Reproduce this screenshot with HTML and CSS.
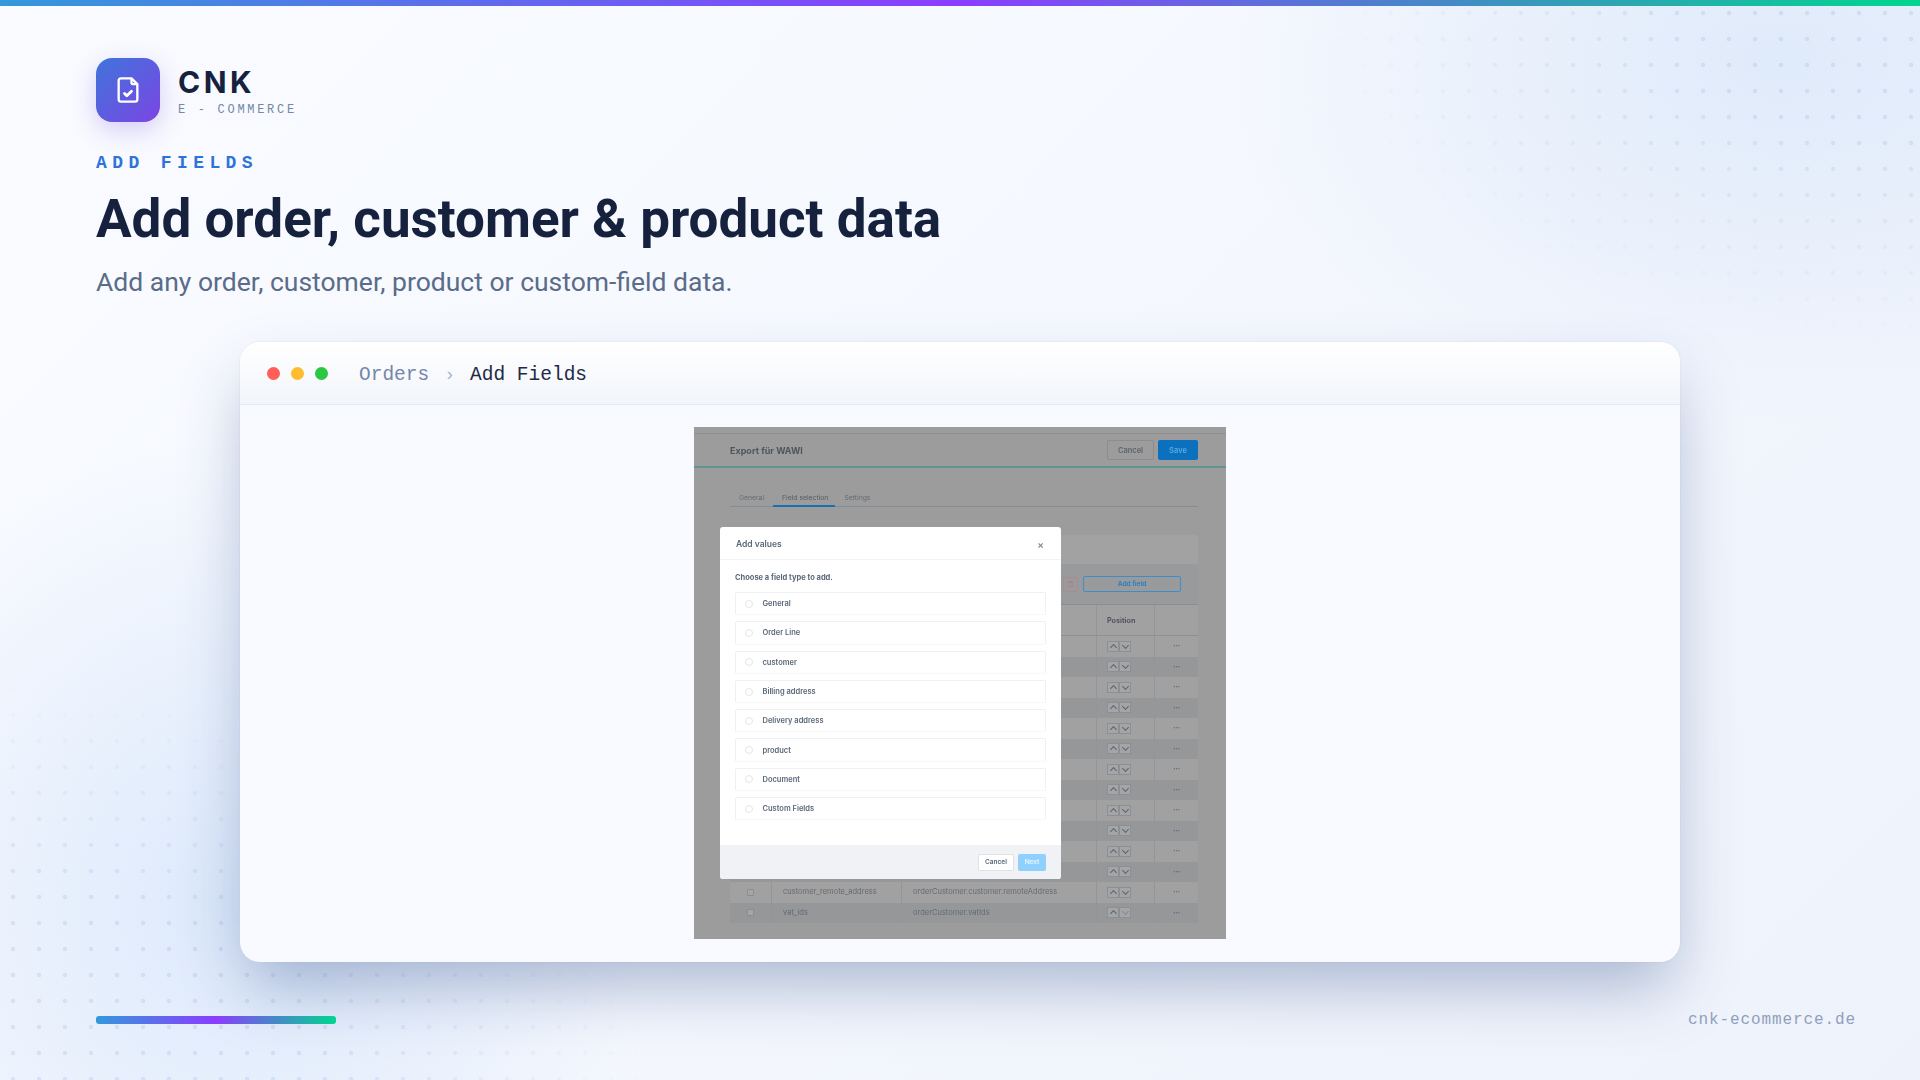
FILE: index.html
```html
<!DOCTYPE html>
<html lang="en">
<head>
  <meta charset="UTF-8">
  <title>Add Fields - CNK E-Commerce</title>
  <link rel="stylesheet" href="styles.css">
</head>
<body>
  <div class="dots dots-top"></div>
  <div class="dots dots-bottom"></div>

  <div class="top-bar"></div>

  <header class="head">
    <div class="brand">
      <div class="brand-icon">
        <svg width="28" height="28" viewBox="0 0 24 24" fill="none" stroke="#fff" stroke-width="2" stroke-linecap="round" stroke-linejoin="round">
          <path d="M15 2H6a2 2 0 0 0-2 2v16a2 2 0 0 0 2 2h12a2 2 0 0 0 2-2V7Z"/>
          <path d="M15 3v3a1 1 0 0 0 1 1h3"/>
          <path d="m9 15 2 2 4-4" stroke-width="2.4"/>
        </svg>
      </div>
      <div class="brand-text">
        <div class="brand-name">CNK</div>
        <div class="brand-sub">E - COMMERCE</div>
      </div>
    </div>
    <div class="eyebrow">ADD FIELDS</div>
    <h1 class="title">Add order, customer &amp; product data</h1>
    <p class="subtitle">Add any order, customer, product or custom-field data.</p>
  </header>

  <main class="window">
    <div class="window-bar">
      <span class="light red"></span>
      <span class="light yellow"></span>
      <span class="light green"></span>
      <div class="crumbs">
        <span class="crumb-muted">Orders</span>
        <span class="crumb-sep">›</span>
        <span class="crumb-now">Add Fields</span>
      </div>
    </div>
    <div class="window-body">
      <div class="shot">
        <div class="shot-head">
          <span class="shot-title">Export für WAWI</span>
          <div class="shot-actions">
            <span class="btn-cancel">Cancel</span>
            <span class="btn-save">Save</span>
          </div>
        </div>
        <div class="tabs">
          <span class="tab">General</span>
          <span class="tab tab-active">Field selection</span>
          <span class="tab">Settings</span>
        </div>
        <div class="panel">
          <div class="panel-top"></div>
          <div class="toolbar">
            <span class="btn-trash">
              <svg width="7" height="8" viewBox="0 0 24 24" fill="none" stroke="currentColor" stroke-width="3"><path d="M3 6h18M8 6V3h8v3M6 6v15h12V6"/></svg>
            </span>
            <span class="btn-add">Add field</span>
          </div>
          <div class="row row-head">
            <span class="cell-check"></span><span class="cell-name"></span><span class="cell-path"></span>
            <span class="cell-pos cell-pos-title">Position</span><span class="cell-more"></span>
          </div>
          <div class="row"><span class="cell-check"><i></i></span><span class="cell-name"></span><span class="cell-path"></span><span class="cell-pos"><b class="up"></b><b class="down"></b></span><span class="cell-more">•••</span></div>
          <div class="row row-alt"><span class="cell-check"><i></i></span><span class="cell-name"></span><span class="cell-path"></span><span class="cell-pos"><b class="up"></b><b class="down"></b></span><span class="cell-more">•••</span></div>
          <div class="row"><span class="cell-check"><i></i></span><span class="cell-name"></span><span class="cell-path"></span><span class="cell-pos"><b class="up"></b><b class="down"></b></span><span class="cell-more">•••</span></div>
          <div class="row row-alt"><span class="cell-check"><i></i></span><span class="cell-name"></span><span class="cell-path"></span><span class="cell-pos"><b class="up"></b><b class="down"></b></span><span class="cell-more">•••</span></div>
          <div class="row"><span class="cell-check"><i></i></span><span class="cell-name"></span><span class="cell-path"></span><span class="cell-pos"><b class="up"></b><b class="down"></b></span><span class="cell-more">•••</span></div>
          <div class="row row-alt"><span class="cell-check"><i></i></span><span class="cell-name"></span><span class="cell-path"></span><span class="cell-pos"><b class="up"></b><b class="down"></b></span><span class="cell-more">•••</span></div>
          <div class="row"><span class="cell-check"><i></i></span><span class="cell-name"></span><span class="cell-path"></span><span class="cell-pos"><b class="up"></b><b class="down"></b></span><span class="cell-more">•••</span></div>
          <div class="row row-alt"><span class="cell-check"><i></i></span><span class="cell-name"></span><span class="cell-path"></span><span class="cell-pos"><b class="up"></b><b class="down"></b></span><span class="cell-more">•••</span></div>
          <div class="row"><span class="cell-check"><i></i></span><span class="cell-name"></span><span class="cell-path"></span><span class="cell-pos"><b class="up"></b><b class="down"></b></span><span class="cell-more">•••</span></div>
          <div class="row row-alt"><span class="cell-check"><i></i></span><span class="cell-name"></span><span class="cell-path"></span><span class="cell-pos"><b class="up"></b><b class="down"></b></span><span class="cell-more">•••</span></div>
          <div class="row"><span class="cell-check"><i></i></span><span class="cell-name"></span><span class="cell-path"></span><span class="cell-pos"><b class="up"></b><b class="down"></b></span><span class="cell-more">•••</span></div>
          <div class="row row-alt"><span class="cell-check"><i></i></span><span class="cell-name"></span><span class="cell-path"></span><span class="cell-pos"><b class="up"></b><b class="down"></b></span><span class="cell-more">•••</span></div>
          <div class="row"><span class="cell-check"><i></i></span><span class="cell-name">customer_remote_address</span><span class="cell-path">orderCustomer.customer.remoteAddress</span><span class="cell-pos"><b class="up"></b><b class="down"></b></span><span class="cell-more">•••</span></div>
          <div class="row row-alt"><span class="cell-check"><i></i></span><span class="cell-name">vat_ids</span><span class="cell-path">orderCustomer.vatIds</span><span class="cell-pos"><b class="up"></b><b class="down off"></b></span><span class="cell-more">•••</span></div>
        </div>

        <div class="modal">
          <div class="modal-head">
            <span>Add values</span>
            <span class="modal-close">×</span>
          </div>
          <div class="modal-body">
            <div class="modal-hint">Choose a field type to add.</div>
            <div class="option"><i></i>General</div>
            <div class="option"><i></i>Order Line</div>
            <div class="option"><i></i>customer</div>
            <div class="option"><i></i>Billing address</div>
            <div class="option"><i></i>Delivery address</div>
            <div class="option"><i></i>product</div>
            <div class="option"><i></i>Document</div>
            <div class="option"><i></i>Custom Fields</div>
          </div>
          <div class="modal-foot">
            <span class="foot-cancel">Cancel</span>
            <span class="foot-next">Next</span>
          </div>
        </div>
      </div>
    </div>
  </main>

  <footer class="foot">
    <div class="foot-bar"></div>
    <div class="foot-url">cnk-ecommerce.de</div>
  </footer>
</body>
</html>
```

FILE: styles.css
```css
* {
  box-sizing: border-box;
}

html, body {
  height: 100%;
}

body {
  position: relative;
  width: 1920px;
  height: 1080px;
  margin: 0;
  overflow: hidden;
  font-family: Inter, "Noto Sans", sans-serif;
  background:
    radial-gradient(ellipse 560px 360px at 1780px 60px, rgba(210, 226, 248, 0.6), rgba(210, 226, 248, 0) 100%),
    radial-gradient(ellipse 420px 460px at 230px 900px, rgba(190, 214, 248, 0.45), rgba(190, 214, 248, 0) 100%),
    linear-gradient(135deg, #f9fbff 0%, #f5f8fe 45%, #eef2fb 100%);
}

/* dot pattern in two corners */
.dots {
  position: absolute;
  background-image: radial-gradient(circle at center, rgba(90, 120, 185, 0.13) 0, rgba(90, 120, 185, 0.13) 2px, transparent 2.6px);
  background-size: 26px 26px;
}

.dots-top {
  top: 0;
  left: 1300px;
  width: 620px;
  height: 390px;
  -webkit-mask-image: radial-gradient(ellipse 620px 350px at 100% 0, #000 40%, transparent 100%);
  mask-image: radial-gradient(ellipse 620px 350px at 100% 0, #000 40%, transparent 100%);
}

.dots-bottom {
  left: 0;
  top: 676px;
  width: 728px;
  height: 404px;
  -webkit-mask-image: radial-gradient(ellipse 680px 410px at 0 100%, #000 45%, transparent 100%);
  mask-image: radial-gradient(ellipse 680px 410px at 0 100%, #000 45%, transparent 100%);
}

.top-bar {
  position: relative;
  height: 6px;
  background: linear-gradient(90deg, #3498db 0%, #8b3dff 50%, #00d68f 100%);
}

/* header */
.head {
  position: relative;
  padding: 52px 96px 0;
  height: 336px;
}

.brand {
  display: flex;
  align-items: center;
  gap: 18px;
}

.brand-icon {
  display: flex;
  align-items: center;
  justify-content: center;
  width: 64px;
  height: 64px;
  border-radius: 16px;
  background: linear-gradient(135deg, #3f74db 0%, #7c45e4 100%);
  box-shadow: 0 8px 24px rgba(110, 70, 225, 0.25);
}

.brand-name {
  font-size: 30px;
  line-height: 36px;
  font-weight: 700;
  letter-spacing: 3.5px;
  color: #16213e;
}

.brand-sub {
  margin-top: 3px;
  font-family: "Liberation Mono", monospace;
  font-size: 12px;
  line-height: 14px;
  letter-spacing: 2.7px;
  color: #7387a8;
}

.eyebrow {
  margin-top: 30px;
  font-family: "Liberation Mono", monospace;
  font-size: 18px;
  line-height: 22px;
  font-weight: 700;
  letter-spacing: 5.4px;
  color: #2d74da;
}

.title {
  margin: 13px 0 0;
  font-family: Roboto, sans-serif;
  font-size: 53px;
  line-height: 64px;
  font-weight: 700;
  color: #16213e;
}

.subtitle {
  margin: 14px 0 0;
  font-family: Roboto, sans-serif;
  font-size: 26.5px;
  line-height: 34px;
  font-weight: 400;
  color: #5a6c88;
}

/* window */
.window {
  position: relative;
  width: 1440px;
  height: 620px;
  margin: 0 auto;
  border-radius: 20px;
  overflow: hidden;
  background: #f8faff;
  box-shadow:
    0 32px 64px -8px rgba(35, 65, 125, 0.34),
    0 0 0 1px rgba(225, 230, 240, 0.35);
}

.window-bar {
  display: flex;
  align-items: center;
  gap: 11px;
  height: 63px;
  padding: 0 0 0 27px;
  border-bottom: 1px solid #e6ebf3;
  background: linear-gradient(180deg, #ffffff 0%, #f2f5fb 100%);
}

.light {
  width: 13px;
  height: 13px;
  border-radius: 50%;
}

.red { background: #ff5f57; }
.yellow { background: #febc2e; }
.green { background: #28c840; }

.crumbs {
  display: flex;
  align-items: center;
  gap: 15px;
  margin: 4px 0 0 20px;
  font-family: "Liberation Mono", monospace;
  font-size: 19.5px;
}

.crumb-muted { color: #7387a8; }
.crumb-sep { color: #a9b6cc; font-size: 18px; }
.crumb-now { color: #1f2a44; }

.window-body {
  display: flex;
  justify-content: center;
  padding-top: 22px;
}

/* the pasted screenshot inside the window */
.shot {
  position: relative;
  width: 532px;
  height: 512px;
  padding: 6px 28px 0 36px;
  background: #9c9c9c;
  filter: blur(0.5px);
  font-size: 7.5px;
  color: #5c6470;
}

.shot-head {
  display: flex;
  align-items: center;
  justify-content: space-between;
  height: 35px;
  margin: 0 -28px 0 -36px;
  padding: 0 28px 0 36px;
  border-top: 1px solid #8f9191;
  border-bottom: 2px solid #5f9490;
}

.shot-title {
  font-size: 9px;
  font-weight: 700;
  color: #4f5560;
}

.shot-actions {
  display: flex;
  gap: 4px;
}

.btn-cancel, .btn-save {
  display: flex;
  align-items: center;
  justify-content: center;
  width: 47px;
  height: 20px;
  border: 1px solid #8a8d90;
  border-radius: 2px;
  font-size: 7.5px;
  font-weight: 600;
}

.btn-save {
  width: 40px;
  border: 0;
  background: #0b70be;
  color: #5ea9de;
}

.tabs {
  display: flex;
  height: 39px;
  padding: 22px 0 0;
  border-bottom: 1px solid #858d96;
  font-size: 6.8px;
}

.tab {
  height: 17px;
  padding: 3px 9px 0;
  color: #666a70;
}

.tab-active {
  padding-right: 7px;
  border-bottom: 2px solid #1a6fb0;
  color: #565b63;
}

.panel {
  margin-top: 28px;
}

.panel-top {
  height: 29px;
  border-radius: 4px 4px 0 0;
  background: #a2a2a2;
}

.toolbar {
  display: flex;
  align-items: center;
  justify-content: flex-end;
  gap: 5px;
  height: 41px;
  padding-right: 17px;
  border-bottom: 1px solid #8a8e92;
  background: #989a9c;
}

.btn-trash {
  display: flex;
  align-items: center;
  justify-content: center;
  width: 15px;
  height: 15px;
  border: 1px solid #ad8a90;
  border-radius: 2px;
  color: #b08088;
}

.btn-add {
  display: flex;
  align-items: center;
  justify-content: center;
  width: 98px;
  height: 16px;
  border: 1px solid #3f8ccc;
  border-radius: 2px;
  font-size: 6.5px;
  font-weight: 700;
  color: #2f7fc0;
}

.row {
  display: grid;
  grid-template-columns: 42px 130px 195px 58px 43px;
  align-items: stretch;
  height: 20.5px;
  background: #a1a1a1;
  line-height: 20px;
  color: #666a70;
}

.row-alt {
  background: #959799;
}

.row-head {
  height: 31px;
  line-height: 31px;
  border-bottom: 1px solid #8e9193;
}

.row > span {
  border-right: 1px solid #92959a;
  white-space: nowrap;
  overflow: hidden;
}

.row > span:last-child {
  border-right: 0;
}

.cell-check {
  display: flex;
  align-items: center;
  justify-content: center;
}

.cell-check i {
  width: 7px;
  height: 7px;
  border: 1px solid #8a8d90;
  border-radius: 1px;
  background: #a6a6a6;
}

.cell-name, .cell-path {
  padding-left: 11px;
}

.cell-pos {
  display: flex;
  align-items: center;
  padding-left: 10px;
}

.cell-pos-title {
  font-size: 7.2px;
  font-weight: 700;
  color: #50555c;
}

.cell-pos b {
  display: flex;
  align-items: center;
  justify-content: center;
  width: 12px;
  height: 11px;
  border: 1px solid #8c9094;
  background: #a3a5a6;
}

.cell-pos b::after {
  content: "";
  width: 4px;
  height: 4px;
  border-left: 1px solid #5c6470;
  border-top: 1px solid #5c6470;
}

.up::after {
  margin-top: 2px;
  transform: rotate(45deg);
}

.down::after {
  margin-top: -2px;
  transform: rotate(225deg);
}

.down.off::after {
  opacity: 0.4;
}

.cell-more {
  font-size: 4px;
  text-align: center;
  letter-spacing: 0;
  color: #5c6470;
}

.modal {
  position: absolute;
  left: 26px;
  top: 100px;
  display: flex;
  flex-direction: column;
  width: 341px;
  height: 352px;
  border-radius: 3px;
  overflow: hidden;
  background: #fff;
  color: #5a6878;
}

.modal-head {
  display: flex;
  align-items: center;
  justify-content: space-between;
  height: 33px;
  padding: 1px 17px 0 16px;
  border-bottom: 1px solid #f2f3f5;
  font-size: 8.5px;
  font-weight: 600;
}

.modal-close {
  font-size: 10px;
  color: #7b8794;
}

.modal-body {
  flex: 1;
  padding: 13px 15px 0;
}

.modal-hint {
  height: 19px;
  font-size: 7.5px;
  font-weight: 700;
}

.option {
  display: flex;
  align-items: center;
  gap: 9.5px;
  height: 23.3px;
  margin-bottom: 6px;
  padding-left: 9px;
  border: 1px solid #eef0f3;
  border-bottom-color: #f7f8f9;
  border-radius: 2px;
  font-size: 7.5px;
  font-weight: 600;
}

.option i {
  width: 8px;
  height: 8px;
  border: 1px solid #e3e6ea;
  border-radius: 50%;
}

.modal-foot {
  display: flex;
  align-items: center;
  justify-content: flex-end;
  gap: 4px;
  height: 34px;
  padding: 0 15px 0 0;
  background: #f0f2f5;
}

.foot-cancel, .foot-next {
  display: flex;
  align-items: center;
  justify-content: center;
  height: 17px;
  border-radius: 2px;
  font-size: 6.5px;
  font-weight: 600;
}

.foot-cancel {
  width: 36px;
  border: 1px solid #dfe2e6;
  background: #fff;
}

.foot-next {
  width: 28px;
  background: #8fd0ff;
  color: #e8f5ff;
}

/* footer */
.foot {
  position: relative;
  display: flex;
  align-items: center;
  justify-content: space-between;
  padding: 48px 64px 0 96px;
}

.foot-bar {
  width: 240px;
  height: 8px;
  border-radius: 3px;
  background: linear-gradient(90deg, #3498db 0%, #8b3dff 50%, #00d68f 100%);
}

.foot-url {
  padding-top: 1px;
  font-family: "Liberation Mono", monospace;
  font-size: 16px;
  letter-spacing: 0.9px;
  color: #8fa0bd;
}
```
